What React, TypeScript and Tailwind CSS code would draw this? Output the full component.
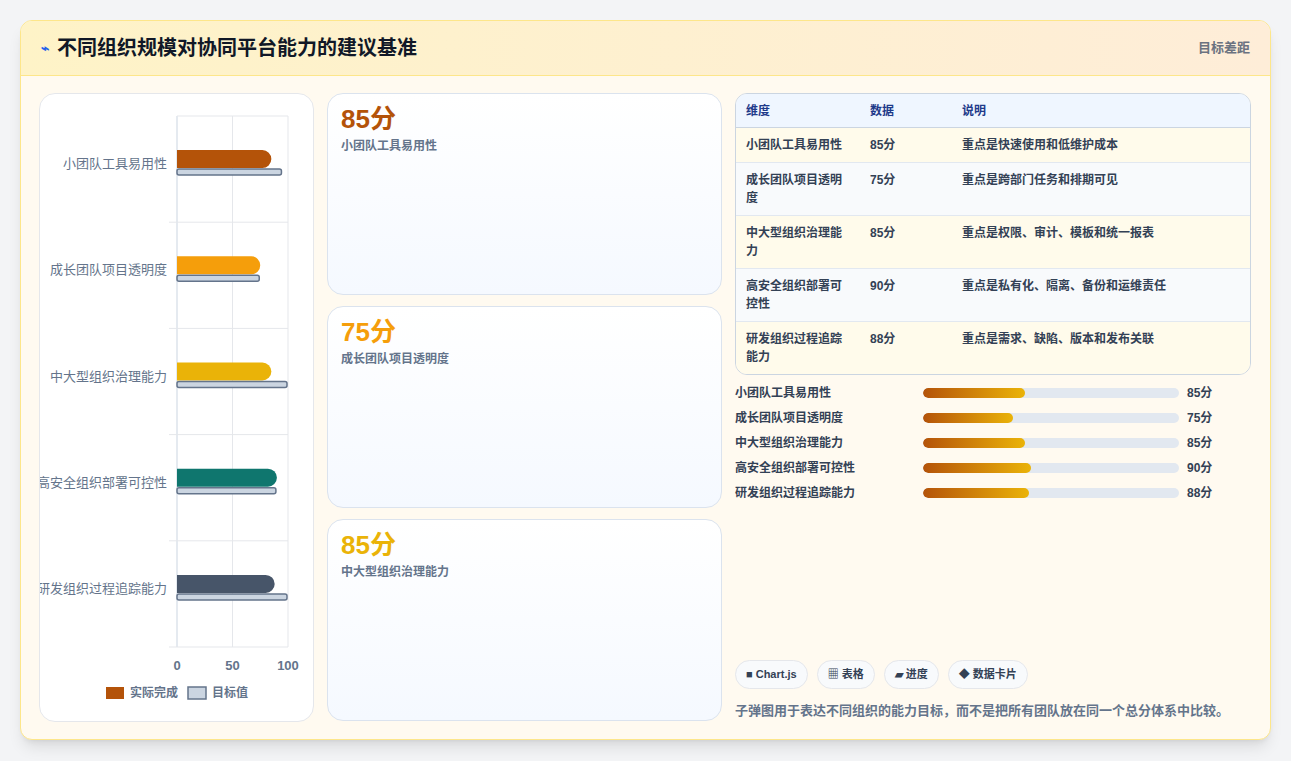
const font = { fontFamily: '"Liberation Sans", "Noto Sans CJK SC", sans-serif' };

const rows = [
  { name: "小团队工具易用性", v: 85, t: 95, c: "#b45309", note: "重点是快速使用和低维护成本" },
  { name: "成长团队项目透明度", v: 75, t: 75, c: "#f59e0b", note: "重点是跨部门任务和排期可见" },
  { name: "中大型组织治理能力", v: 85, t: 100, c: "#eab308", note: "重点是权限、审计、模板和统一报表" },
  { name: "高安全组织部署可控性", v: 90, t: 90, c: "#0f766e", note: "重点是私有化、隔离、备份和运维责任" },
  { name: "研发组织过程追踪能力", v: 88, t: 100, c: "#475569", note: "重点是需求、缺陷、版本和发布关联" },
];

const Chart = () => {
  const x0 = 137, w = 111, y0 = 22, rh = 106.2;
  return (
    <svg width="274" height="628" className="block">
      {[0, 50, 100].map((g) => (
        <line key={g} x1={x0 + (g / 100) * w} x2={x0 + (g / 100) * w} y1={y0} y2={y0 + rh * 5} stroke={g === 0 ? "#cbd5e1" : "#e5e7eb"} />
      ))}
      <line x1={x0} x2={x0 + w} y1={y0} y2={y0} stroke="#e5e7eb" />
      {[1, 2, 3, 4, 5].map((i) => (
        <line key={i} x1={x0 - 8} x2={x0 + w} y1={y0 + rh * i} y2={y0 + rh * i} stroke="#e5e7eb" />
      ))}
      {rows.map((r, i) => {
        const cy = y0 + rh * i + rh / 2;
        return (
          <g key={i}>
            <text x={x0 - 10} y={cy - 1} textAnchor="end" fontSize="13" fill="#64748b" style={font}>{r.name}</text>
            <path d={`M${x0} ${cy - 19} H${x0 + (r.v / 100) * w - 9} a9 9 0 0 1 0 18 H${x0} Z`} fill={r.c} />
            <rect x={x0} y={cy} width={(r.t / 100) * w - 1} height={6} rx={2} fill="#cbd5e1" stroke="#64748b" strokeWidth="1.5" />
          </g>
        );
      })}
      {[0, 50, 100].map((g) => (
        <text key={g} x={x0 + (g / 100) * w} y={576} textAnchor="middle" fontSize="13" fontWeight="bold" fill="#64748b" style={font}>{g}</text>
      ))}
      <rect x={66} y={593} width={18} height={12} fill="#b45309" />
      <text x={90} y={603} fontSize="12" fontWeight="bold" fill="#64748b" style={font}>实际完成</text>
      <rect x={148} y={593} width={18} height={12} fill="#cbd5e1" stroke="#64748b" strokeWidth="1.5" />
      <text x={172} y={603} fontSize="12" fontWeight="bold" fill="#64748b" style={font}>目标值</text>
    </svg>
  );
};

export default function App() {
  return (
    <div className="w-[1291px] h-[761px] bg-[#f3f4f6] pt-[20px] pl-[20px]" style={font}>
      <div className="w-[1251px] h-[720px] rounded-xl border border-[#fde68a] bg-[#fffaf0] shadow-lg overflow-hidden flex flex-col">
        <div className="h-[55px] flex items-center justify-between px-5 bg-gradient-to-r from-[#fef3c7] to-[#feedd8] border-b border-[#fde68a]">
          <div className="flex items-center gap-2">
            <span className="text-[#2563eb] text-sm font-bold">⌁</span>
            <h1 className="text-[20px] font-bold text-[#111827]">不同组织规模对协同平台能力的建议基准</h1>
          </div>
          <span className="text-[13px] font-bold text-[#6b7280]">目标差距</span>
        </div>
        <div className="flex gap-[13px] px-[18px] pt-[17px]">
          <div className="w-[275px] h-[629px] rounded-2xl border border-[#e5e7eb] bg-white overflow-hidden">
            <Chart />
          </div>
          <div className="w-[395px] flex flex-col gap-[11px]">
            {rows.slice(0, 3).map((r, i) => (
              <div key={i} className="h-[202px] rounded-2xl border border-[#dbe3ee] bg-gradient-to-b from-white to-[#f5f9ff] px-[13px] pt-[10px]">
                <div className="text-[26px] font-bold leading-[30px]" style={{ color: r.c }}>{r.v}分</div>
                <div className="text-[12px] font-bold text-[#64748b] mt-[3px]">{r.name}</div>
              </div>
            ))}
          </div>
          <div className="w-[516px] flex flex-col h-[629px]">
            <div className="rounded-xl border border-[#cbd5e1] overflow-hidden text-[12px] font-bold">
              <div className="flex h-[34px] items-center bg-[#eff6ff] text-[#1e3a8a] border-b border-[#cbd5e1]">
                <div className="w-[134px] pl-[10px]">维度</div>
                <div className="w-[92px]">数据</div>
                <div>说明</div>
              </div>
              {rows.map((r, i) => (
                <div key={i} className={`flex text-[#334155] leading-[18px] py-[8px] ${i < 4 ? "border-b border-[#e2e8f0]" : ""} ${i % 2 === 0 ? "bg-[#fffbeb]" : "bg-[#f8fafc]"}`}>
                  <div className="w-[134px] pl-[10px] pr-[24px]">{r.name}</div>
                  <div className="w-[92px]">{r.v}分</div>
                  <div>{r.note}</div>
                </div>
              ))}
            </div>
            <div className="mt-[9px] flex flex-col gap-[7px]">
              {rows.map((r, i) => (
                <div key={i} className="flex items-center h-[18px] text-[12px] font-bold text-[#334155]">
                  <div className="w-[188px]">{r.name}</div>
                  <div className="w-[256px] h-[10px] rounded-full bg-[#e2e8f0] overflow-hidden">
                    <div className="h-full rounded-full bg-gradient-to-r from-[#b45309] to-[#eab308]" style={{ width: `${r.v * 1.2}px` }} />
                  </div>
                  <div className="ml-[8px]">{r.v}分</div>
                </div>
              ))}
            </div>
            <div className="mt-auto flex gap-[9px]">
              {["■ Chart.js", "▦ 表格", "▰ 进度", "◆ 数据卡片"].map((t) => (
                <span key={t} className="h-[29px] px-[10px] flex items-center rounded-full border border-[#e5e7eb] bg-[#f8fafc] text-[11px] font-bold text-[#334155]">{t}</span>
              ))}
            </div>
            <p className="mt-[12px] mb-[2px] text-[13px] font-bold text-[#64748b]">子弹图用于表达不同组织的能力目标，而不是把所有团队放在同一个总分体系中比较。</p>
          </div>
        </div>
      </div>
    </div>
  );
}
